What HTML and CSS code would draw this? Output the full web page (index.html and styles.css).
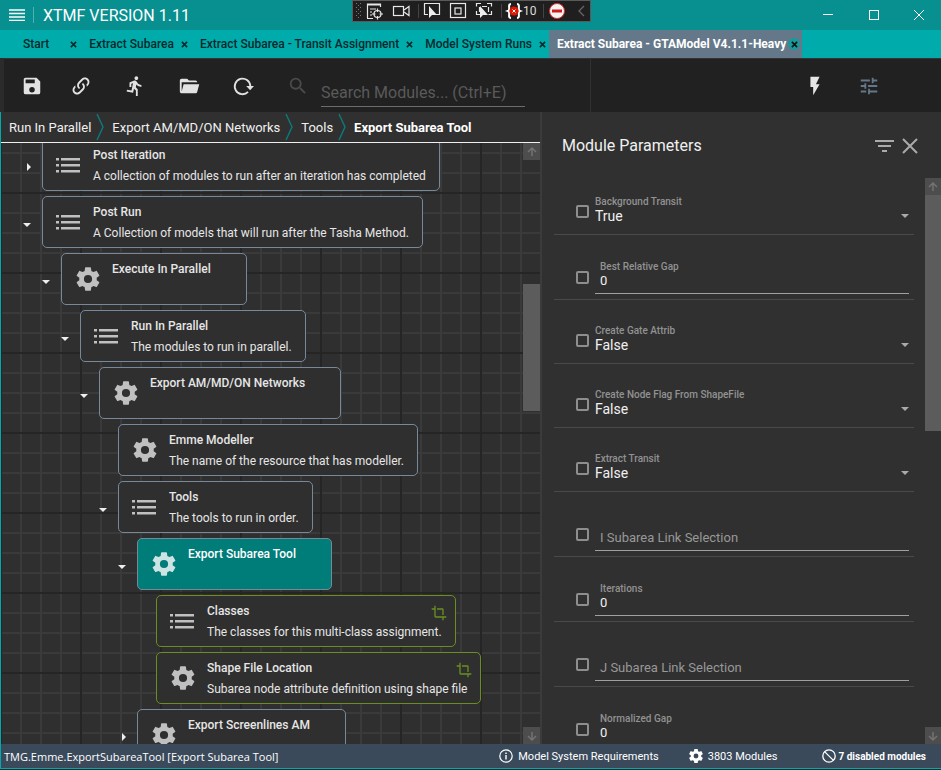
FILE: index.html
```html
<!DOCTYPE html>
<html lang="en">
<head>
<meta charset="utf-8">
<meta name="viewport" content="width=device-width, initial-scale=1">
<title>XTMF Version 1.11</title>
<link rel="stylesheet" href="styles.css">
</head>
<body>
<svg class="symbols" aria-hidden="true">
  <symbol id="cog" viewBox="0 0 24 24"><path d="M12,15.5A3.5,3.5 0 0,1 8.5,12A3.5,3.5 0 0,1 12,8.5A3.5,3.5 0 0,1 15.5,12A3.5,3.5 0 0,1 12,15.5M19.43,12.97C19.47,12.65 19.5,12.33 19.5,12C19.5,11.67 19.47,11.34 19.43,11L21.54,9.37C21.73,9.22 21.78,8.95 21.66,8.73L19.66,5.27C19.54,5.05 19.27,4.96 19.05,5.05L16.56,6.05C16.04,5.66 15.5,5.32 14.87,5.07L14.5,2.42C14.46,2.18 14.25,2 14,2H10C9.75,2 9.54,2.18 9.5,2.42L9.13,5.07C8.5,5.32 7.96,5.66 7.44,6.05L4.95,5.05C4.73,4.96 4.46,5.05 4.34,5.27L2.34,8.73C2.21,8.95 2.27,9.22 2.46,9.37L4.57,11C4.53,11.34 4.5,11.67 4.5,12C4.5,12.33 4.53,12.65 4.57,12.97L2.46,14.63C2.27,14.78 2.21,15.05 2.34,15.27L4.34,18.73C4.46,18.95 4.73,19.03 4.95,18.95L7.44,17.94C7.96,18.34 8.5,18.68 9.13,18.93L9.5,21.58C9.54,21.82 9.75,22 10,22H14C14.25,22 14.46,21.82 14.5,21.58L14.87,18.93C15.5,18.67 16.04,18.34 16.56,17.94L19.05,18.95C19.27,19.03 19.54,18.95 19.66,18.73L21.66,15.27C21.78,15.05 21.73,14.78 21.54,14.63L19.43,12.97Z"/></symbol>
  <symbol id="list" viewBox="0 0 28 28"><path d="M1 7h3v2.600H1zM6 7h19v2.600H6zM1 13h3v2.600H1zM6 13h19v2.600H6zM1 19h3v2.600H1zM6 19h19v2.600H6z"/></symbol>
  <symbol id="crop" viewBox="0 0 24 24"><path d="M7,17V1H5V5H1V7H5V17A2,2 0 0,0 7,19H17V23H19V19H23V17M17,15H19V7C19,5.89 18.1,5 17,5H9V7H17V15Z"/></symbol>
  <symbol id="open" viewBox="0 0 10 10"><path d="M1 3h8L5 7z"/></symbol>
  <symbol id="shut" viewBox="0 0 10 10"><path d="M5 0v8l4-4z"/></symbol>
  <symbol id="up" viewBox="0 0 10 10"><path d="M5 9V2M1 5l4-4 4 4" fill="none" stroke="currentColor" stroke-width="1.5"/></symbol>
  <symbol id="down" viewBox="0 0 10 10"><path d="M5 1v7M1 5l4 4 4-4" fill="none" stroke="currentColor" stroke-width="1.5"/></symbol>
  <symbol id="x" viewBox="0 0 8 8"><path d="M1 1l6 6M7 1L1 7" fill="none" stroke="currentColor" stroke-width="1.8"/></symbol>
  <symbol id="chevron" viewBox="0 0 8 28"><path d="M1 1l6 13-6 13" fill="none" stroke="currentColor" stroke-width="1.4"/></symbol>
</svg>

<div class="window">
  <header class="titlebar">
    <button class="menu" aria-label="Menu"><svg viewBox="0 0 16 12"><path d="M0 1h16M0 4.500h16M0 8h16M0 11.500h16" stroke="currentColor" stroke-width="1.4"/></svg></button>
    <h1>XTMF VERSION 1.11</h1>
    <div class="caption">
      <button aria-label="Minimize"><svg viewBox="0 0 12 12"><path d="M1 5.500h10" stroke="currentColor"/></svg></button>
      <button aria-label="Maximize"><svg viewBox="0 0 12 12"><rect x="1.500" y="1.500" width="9" height="9" fill="none" stroke="currentColor"/></svg></button>
      <button aria-label="Close"><svg viewBox="0 0 12 12"><path d="M1 1l10 10M11 1L1 11" stroke="currentColor"/></svg></button>
    </div>
    <div class="debug">
      <svg viewBox="0 0 238 20" aria-hidden="true">
        <g fill="#777"><path d="M3 2h1v1H3zM7 2h1v1H7zM5 4h1v1H5zM3 6h1v1H3zM7 6h1v1H7zM5 8h1v1H5zM3 10h1v1H3zM7 10h1v1H7zM5 12h1v1H5zM3 14h1v1H3zM7 14h1v1H7zM5 16h1v1H5z"/></g>
        <g fill="none" stroke="#e8e8e8" stroke-width="1.2">
          <path d="M14.500 17V3h13v3M14 4h14M17 8h6M17 11h2M17 14h2M14 17.500h6"/><circle cx="24.500" cy="13" r="3.500"/><path d="M24.500 7.500v3.500M24.500 15v3.500M19 13h3.500M26.500 13h3.500"/>
          <rect x="40.500" y="5.500" width="10" height="9"/><path d="M51 9l5-3.500v9L51 11"/>
          <path d="M75 13.500h-3.500v-11h15v11H83"/>
          <rect x="97.500" y="2.500" width="15" height="14"/><rect x="102" y="7" width="6" height="6"/>
          <path d="M128 2.500h-4.500v3M134 2.500h4.500v3M123.500 10v3.500h4M138.500 10v3.500h-3M129 5.500h5M126.500 6v5M135.500 6v5"/>
        </g>
        <path d="M76 5v12l3-3h5zM127 5v12l3-3h5z" fill="#eee"/>
        <path d="M65.500 3v14M148.500 3v14M190.500 3v14" stroke="#444"/>
        <path d="M158 3c-4 0 0 6-3 7 3 1-1 7 3 7M164 3c4 0 0 6 3 7-3 1 1 7-3 7" fill="none" stroke="#fff" stroke-width="2"/>
        <circle cx="161" cy="10" r="4.500" fill="#e51400"/><path d="M159.500 8.500l3 3M162.500 8.500l-3 3" stroke="#fff"/>
        <circle cx="204" cy="10" r="7.500" fill="#f4f4f4" stroke="#e03030"/><path d="M199 8.500h10v3h-10z" fill="#d51a1a"/>
        <path d="M231 5l-5 5 5 5" fill="none" stroke="#666" stroke-width="1.300"/>
      </svg>
      <span>10</span>
    </div>
  </header>

  <nav class="tabs" aria-label="Documents">
    <div class="tab first"><a href="#">Start</a><button aria-label="Close Start"><svg><use href="#x"/></svg></button></div>
    <div class="tab"><a href="#">Extract Subarea</a><button aria-label="Close tab"><svg><use href="#x"/></svg></button></div>
    <div class="tab"><a href="#">Extract Subarea - Transit Assignment</a><button aria-label="Close tab"><svg><use href="#x"/></svg></button></div>
    <div class="tab"><a href="#">Model System Runs</a><button aria-label="Close tab"><svg><use href="#x"/></svg></button></div>
    <div class="tab active"><a href="#">Extract Subarea - GTAModel V4.1.1-Heavy</a><button aria-label="Close tab"><svg><use href="#x"/></svg></button></div>
  </nav>

  <div class="toolbar">
    <div class="tools">
      <button class="save" aria-label="Save"><svg viewBox="0 0 24 24"><path d="M15,9H5V5H15M12,19A3,3 0 0,1 9,16A3,3 0 0,1 12,13A3,3 0 0,1 15,16A3,3 0 0,1 12,19M17,3H5C3.89,3 3,3.9 3,5V19A2,2 0 0,0 5,21H19A2,2 0 0,0 21,19V7L17,3Z"/></svg></button>
      <button aria-label="Link parameters"><svg viewBox="0 0 24 24"><path d="M10.59,13.41C11,13.8 11,14.44 10.59,14.83C10.2,15.22 9.56,15.22 9.17,14.83C7.22,12.88 7.22,9.71 9.17,7.76V7.76L12.71,4.22C14.66,2.27 17.83,2.27 19.78,4.22C21.73,6.17 21.73,9.34 19.78,11.29L18.29,12.78C18.3,11.96 18.17,11.14 17.89,10.36L18.36,9.88C19.54,8.71 19.54,6.81 18.36,5.64C17.19,4.46 15.29,4.46 14.12,5.64L10.59,9.17C9.41,10.34 9.41,12.24 10.59,13.41M13.41,9.17C13.8,8.78 14.44,8.78 14.83,9.17C16.78,11.12 16.78,14.29 14.83,16.24V16.24L11.29,19.78C9.34,21.73 6.17,21.73 4.22,19.78C2.27,17.83 2.27,14.66 4.22,12.71L5.71,11.22C5.7,12.04 5.83,12.86 6.11,13.65L5.64,14.12C4.46,15.29 4.46,17.19 5.64,18.36C6.81,19.54 8.71,19.54 9.88,18.36L13.41,14.83C14.59,13.66 14.59,11.76 13.41,10.59C13,10.2 13,9.56 13.41,9.17Z"/></svg></button>
      <button aria-label="Run"><svg viewBox="0 0 24 24"><path d="M13.49 5.48c1.1 0 2-.9 2-2s-.9-2-2-2-2 .9-2 2 .9 2 2 2zm-3.6 13.9l1-4.4 2.1 2v6h2v-7.5l-2.1-2 .6-3c1.3 1.5 3.3 2.5 5.5 2.5v-2c-1.9 0-3.500-1-4.300-2.400l-1-1.600c-.4-.6-1-1-1.700-1-.3 0-.5.1-.8.1l-5.200 2.200v4.700h2v-3.400l1.800-.7-1.600 8.100-4.900-1-.4 2 7 1.400z"/></svg></button>
      <button aria-label="Open folder"><svg viewBox="0 0 24 24"><path d="M19,20H4C2.89,20 2,19.1 2,18V6C2,4.89 2.89,4 4,4H10L12,6H19A2,2 0 0,1 21,8H21L4,8V18L6.14,10H23.21L20.93,18.5C20.7,19.37 19.92,20 19,20Z"/></svg></button>
      <button aria-label="Reload"><svg viewBox="0 0 24 24"><path d="M17.500 18.500A8.500 8.500 0 1 1 20 12" fill="none" stroke="currentColor" stroke-width="2"/><path d="M15.500 12H24l-4.200 4.500z"/></svg></button>
    </div>
    <label class="search">
      <svg viewBox="0 0 24 24" aria-hidden="true"><path d="M9.5,3A6.5,6.5 0 0,1 16,9.5C16,11.11 15.41,12.59 14.44,13.73L14.71,14H15.5L20.5,19L19,20.5L14,15.5V14.71L13.73,14.44C12.59,15.41 11.11,16 9.5,16A6.5,6.5 0 0,1 3,9.5A6.5,6.5 0 0,1 9.5,3M9.5,5C7,5 5,7 5,9.5C5,12 7,14 9.5,14C12,14 14,12 14,9.5C14,7 12,5 9.5,5Z"/></svg>
      <input type="text" placeholder="Search Modules... (Ctrl+E)" aria-label="Search Modules">
    </label>
    <div class="actions">
      <button aria-label="Quick parameters"><svg viewBox="0 0 24 24"><path d="M7,2V13H10V22L17,10H13L17,2H7Z"/></svg></button>
      <button class="tune" aria-label="Module parameters"><svg viewBox="0 0 24 24"><path d="M3,17V19H9V17H3M3,5V7H13V5H3M13,21V19H21V17H13V15H11V21H13M7,9V11H3V13H7V15H9V9H7M21,13V11H11V13H21M15,9H17V7H21V5H17V3H15V9Z"/></svg></button>
    </div>
  </div>

  <div class="content">
    <main class="system">
      <nav class="crumbs" aria-label="Breadcrumb">
        <a href="#">Run In Parallel</a><svg><use href="#chevron"/></svg>
        <a href="#">Export AM/MD/ON Networks</a><svg><use href="#chevron"/></svg>
        <a href="#">Tools</a><svg><use href="#chevron"/></svg>
        <a href="#" class="current">Export Subarea Tool</a>
      </nav>
      <div class="canvas">
        <ul class="tree">
          <li>
            <div class="row"><button class="toggle" aria-label="Expand"><svg><use href="#shut"/></svg></button>
              <div class="node"><svg class="icon"><use href="#list"/></svg><div><h2>Post Iteration</h2><p>A collection of modules to run after an iteration has completed</p></div></div></div>
          </li>
          <li>
            <div class="row"><button class="toggle" aria-label="Collapse"><svg><use href="#open"/></svg></button>
              <div class="node"><svg class="icon"><use href="#list"/></svg><div><h2>Post Run</h2><p>A Collection of models that will run after the Tasha Method.</p></div></div></div>
            <ul>
              <li>
                <div class="row"><button class="toggle" aria-label="Collapse"><svg><use href="#open"/></svg></button>
                  <div class="node"><svg class="icon"><use href="#cog"/></svg><div><h2>Execute In Parallel</h2></div></div></div>
                <ul>
                  <li>
                    <div class="row"><button class="toggle" aria-label="Collapse"><svg><use href="#open"/></svg></button>
                      <div class="node"><svg class="icon"><use href="#list"/></svg><div><h2>Run In Parallel</h2><p>The modules to run in parallel.</p></div></div></div>
                    <ul>
                      <li>
                        <div class="row"><button class="toggle" aria-label="Collapse"><svg><use href="#open"/></svg></button>
                          <div class="node"><svg class="icon"><use href="#cog"/></svg><div><h2>Export AM/MD/ON Networks</h2></div></div></div>
                        <ul>
                          <li>
                            <div class="row leaf">
                              <div class="node"><svg class="icon"><use href="#cog"/></svg><div><h2>Emme Modeller</h2><p>The name of the resource that has modeller.</p></div></div></div>
                          </li>
                          <li>
                            <div class="row"><button class="toggle" aria-label="Collapse"><svg><use href="#open"/></svg></button>
                              <div class="node"><svg class="icon"><use href="#list"/></svg><div><h2>Tools</h2><p>The tools to run in order.</p></div></div></div>
                            <ul>
                              <li>
                                <div class="row"><button class="toggle" aria-label="Collapse"><svg><use href="#open"/></svg></button>
                                  <div class="node selected"><svg class="icon"><use href="#cog"/></svg><div><h2>Export Subarea Tool</h2></div></div></div>
                                <ul>
                                  <li>
                                    <div class="row leaf">
                                      <div class="node meta"><svg class="icon"><use href="#list"/></svg><div><h2>Classes</h2><p>The classes for this multi-class assignment.</p></div><svg class="badge"><use href="#crop"/></svg></div></div>
                                  </li>
                                  <li>
                                    <div class="row leaf">
                                      <div class="node meta"><svg class="icon"><use href="#cog"/></svg><div><h2>Shape File Location</h2><p>Subarea node attribute definition using shape file</p></div><svg class="badge"><use href="#crop"/></svg></div></div>
                                  </li>
                                </ul>
                              </li>
                              <li>
                                <div class="row"><button class="toggle" aria-label="Expand"><svg><use href="#shut"/></svg></button>
                                  <div class="node"><svg class="icon"><use href="#cog"/></svg><div><h2>Export Screenlines AM</h2></div></div></div>
                              </li>
                            </ul>
                          </li>
                        </ul>
                      </li>
                    </ul>
                  </li>
                </ul>
              </li>
            </ul>
          </li>
        </ul>
        <div class="scrollbar tree-scroll" aria-hidden="true"><span class="arrow"><svg><use href="#up"/></svg></span><span class="before"></span><span class="thumb"></span><span class="after"></span><span class="arrow"><svg><use href="#down"/></svg></span></div>
      </div>
    </main>

    <aside class="params">
      <header>
        <h2>Module Parameters</h2>
        <button aria-label="Filter"><svg viewBox="0 0 20 14"><path d="M0 1h19v2H0zM3 6h13v2H3zM7 11h5v2H7z"/></svg></button>
        <button aria-label="Close"><svg viewBox="0 0 16 16"><path d="M1 1l14 14M15 1L1 15" stroke="currentColor" stroke-width="2"/></svg></button>
      </header>
      <div class="body">
        <div class="list">
          <div class="param combo"><input type="checkbox" aria-label="Quick: Background Transit"><div class="field"><label for="p1">Background Transit</label><select id="p1"><option>True</option><option>False</option></select></div><svg class="drop"><use href="#open"/></svg></div>
          <div class="param"><input type="checkbox" aria-label="Quick: Best Relative Gap"><div class="field"><label for="p2">Best Relative Gap</label><input type="text" id="p2" value="0"></div></div>
          <div class="param combo"><input type="checkbox" aria-label="Quick: Create Gate Attrib"><div class="field"><label for="p3">Create Gate Attrib</label><select id="p3"><option>False</option><option>True</option></select></div><svg class="drop"><use href="#open"/></svg></div>
          <div class="param combo"><input type="checkbox" aria-label="Quick: Create Node Flag From ShapeFile"><div class="field"><label for="p4">Create Node Flag From ShapeFile</label><select id="p4"><option>False</option><option>True</option></select></div><svg class="drop"><use href="#open"/></svg></div>
          <div class="param combo"><input type="checkbox" aria-label="Quick: Extract Transit"><div class="field"><label for="p5">Extract Transit</label><select id="p5"><option>False</option><option>True</option></select></div><svg class="drop"><use href="#open"/></svg></div>
          <div class="param"><input type="checkbox" aria-label="Quick: I Subarea Link Selection"><div class="field"><input type="text" placeholder="I Subarea Link Selection" aria-label="I Subarea Link Selection"></div></div>
          <div class="param"><input type="checkbox" aria-label="Quick: Iterations"><div class="field"><label for="p7">Iterations</label><input type="text" id="p7" value="0"></div></div>
          <div class="param"><input type="checkbox" aria-label="Quick: J Subarea Link Selection"><div class="field"><input type="text" placeholder="J Subarea Link Selection" aria-label="J Subarea Link Selection"></div></div>
          <div class="param"><input type="checkbox" aria-label="Quick: Normalized Gap"><div class="field"><label for="p9">Normalized Gap</label><input type="text" id="p9" value="0"></div></div>
        </div>
        <div class="scrollbar param-scroll" aria-hidden="true"><span class="arrow"><svg><use href="#up"/></svg></span><span class="thumb"></span><span class="after"></span><span class="arrow"><svg><use href="#down"/></svg></span></div>
      </div>
    </aside>
  </div>

  <footer class="status">
    <span class="path">TMG.Emme.ExportSubareaTool [Export Subarea Tool]</span>
    <span class="item"><svg viewBox="0 0 14 14"><circle cx="7" cy="7" r="6.200" fill="none" stroke="currentColor" stroke-width="1.200"/><path d="M6.300 6h1.400v4.500H6.300zM6.300 3.500h1.400v1.400H6.300z"/></svg>Model System Requirements</span>
    <span class="item"><svg viewBox="2 2 20 20"><use href="#cog" width="24" height="24"/></svg>3803 Modules</span>
    <span class="item disabled"><svg viewBox="0 0 14 14"><g fill="none" stroke="currentColor" stroke-width="1.300"><circle cx="7" cy="7" r="6.200"/><path d="M2.600 2.600l8.800 8.800"/></g></svg>7 disabled modules</span>
  </footer>
</div>
</body>
</html>
```
FILE: styles.css
```css
* { box-sizing: border-box; }

body {
  margin: 0;
  background: #2b2b2b;
  color: #e6e6e6;
  font-family: Roboto, "Liberation Sans", sans-serif;
  font-size: 13px;
}

h1, h2, p, ul { margin: 0; padding: 0; }
ul { list-style: none; }
a { color: inherit; text-decoration: none; }
svg { display: block; fill: currentColor; flex: none; }
.symbols { position: absolute; width: 0; height: 0; }

button {
  display: flex;
  align-items: center;
  justify-content: center;
  padding: 0;
  border: 0;
  background: none;
  color: inherit;
}

input, select {
  font: inherit;
  color: inherit;
  background: none;
  border: 0;
  border-radius: 0;
  padding: 0;
  margin: 0;
  outline: 0;
  min-width: 0;
}

.window {
  display: flex;
  flex-direction: column;
  height: 100vh;
  padding-bottom: 1px;
  overflow: hidden;
}

/* Title bar */
.titlebar {
  position: relative;
  display: flex;
  align-items: center;
  flex: none;
  height: 30px;
  background: #088f8f;
  color: #fff;
}
.menu { width: 34px; height: 16px; border-right: 1px solid #4fb0b0; }
.menu svg { width: 16px; height: 12px; }
.titlebar h1 { margin-left: 9px; font-size: 16px; font-weight: 400; }
.caption { display: flex; margin-left: auto; }
.caption button { width: 46px; height: 30px; }
.caption button:last-child { width: 44px; }
.caption svg { width: 12px; height: 12px; }

.debug {
  position: absolute;
  top: 0;
  left: 352px;
  width: 239px;
  height: 22px;
  background: #1f1f1f;
  border: 1px solid #5a5a5a;
}
.debug svg { width: 238px; height: 20px; }
.debug span {
  position: absolute;
  top: 3px;
  left: 170px;
  font-size: 12px;
  line-height: 14px;
  color: #ddd;
}

/* Document tabs */
.tabs {
  display: flex;
  flex: none;
  height: 28px;
  background: #00abab;
  color: #06292c;
  font-size: 12px;
  font-weight: 500;
}
.tab { display: flex; align-items: center; gap: 4px; padding: 0 1px 0 9px; white-space: nowrap; }
.tab button { width: 12px; height: 12px; border-radius: 6px; }
.tab svg { width: 7px; height: 7px; }
.tab.first { padding-left: 23px; }
.tab.first button { margin-left: 14px; }
.tab.active { gap: 2px; padding: 0 2px 0 8px; background: #64788a; color: #fff; font-weight: 700; }
.tab.active button { background: #169a9a; color: #111; }

/* Toolbar */
.toolbar {
  display: flex;
  align-items: center;
  flex: none;
  height: 54px;
  margin-left: 4px;
  border-top: 1px solid #333;
  background: #212121;
}
.toolbar button { width: 54px; height: 40px; }
.toolbar .save { width: 45px; }
.toolbar svg { width: 22px; height: 22px; }
.tools { display: flex; padding-left: 5px; color: #e2e2e2; }
.search {
  display: flex;
  align-items: center;
  align-self: stretch;
  gap: 12px;
  width: 321px;
  padding-left: 17px;
  border-right: 1px solid #303030;
  color: #4a4a4a;
}
.search input {
  width: 204px;
  height: 28px;
  margin-top: 14px;
  border-bottom: 1px solid #6c6c6c;
  font-size: 16px;
}
.search input::placeholder { color: #5a5a5a; opacity: 1; }
.actions { display: flex; margin-left: auto; padding-right: 45px; color: #e6e6e6; }
.actions .tune { color: #64788a; }

/* Main split */
.content { display: flex; flex: 1; min-height: 0; border-left: 1px solid #00abab; }
.system { display: flex; flex-direction: column; flex: 3; min-width: 0; background: #303030; }
.params { display: flex; flex-direction: column; flex: none; width: 401px; border-left: 2px solid #3b3b3b; background: #303030; }

.crumbs {
  display: flex;
  align-items: center;
  flex: none;
  height: 31px;
  padding-left: 8px;
  border-bottom: 1px solid #f0f0f0;
  color: #f0f0f0;
  white-space: nowrap;
}
.crumbs svg { width: 8px; height: 28px; margin: 0 8px 0 5px; color: #0b7c7c; }
.crumbs .current { font-weight: 700; color: #fff; }

/* Module tree over a ruled canvas */
.canvas {
  display: flex;
  flex: 1;
  min-height: 0;
  overflow: hidden;
  background-color: #2f2f2f;
  background-image:
    linear-gradient(#252525 2px, transparent 2px),
    linear-gradient(90deg, #252525 2px, transparent 2px),
    linear-gradient(#3a3a3a 2px, transparent 2px),
    linear-gradient(90deg, #3a3a3a 2px, transparent 2px);
  background-size: 80px 80px, 80px 80px, 20px 20px, 20px 20px;
  background-position: 79px 49px, 79px 49px, 19px 9px, 19px 9px;
}
.tree { flex: 1; min-width: 0; margin-top: -4px; padding-left: 11px; }
.tree ul { padding-left: 19px; }
.row { display: flex; align-items: center; margin-bottom: 5px; }
.row.leaf { padding-left: 30px; }
.toggle { width: 30px; height: 52px; color: #eee; }
.toggle svg { width: 10px; height: 10px; margin-top: 6px; }
.node {
  position: relative;
  display: flex;
  gap: 10px;
  height: 52px;
  padding: 0 11px 0 12px;
  border: 1px solid #778899;
  border-radius: 5px;
  background: #2f2f2f;
  white-space: nowrap;
}
.icon { width: 28px; height: 28px; margin-top: 11px; color: #c0c0c0; }
.node h2 { padding: 7px 24px 0 0; font-size: 12px; line-height: 16px; font-weight: 500; }
.node p { margin-top: 5px; padding-right: 2px; font-size: 12px; line-height: 16px; }
.node.selected { background: #007c79; color: #fff; }
.selected .icon { color: #cce4e4; }
.node.meta { border-color: #6b8e23; }
.badge { position: absolute; top: 9px; right: 8px; width: 16px; height: 16px; color: #6b8e23; }

.scrollbar { display: flex; flex-direction: column; flex: none; width: 17px; }
.arrow { display: flex; align-items: center; justify-content: center; height: 17px; background: #4d4d4d; color: #737373; }
.arrow svg { width: 10px; height: 10px; }
.thumb { background: #5c5c5c; }
.tree-scroll .before { flex: 124; }
.tree-scroll .thumb { flex: 127; }
.tree-scroll .after { flex: 316; }
.param-scroll { width: 16px; margin-top: 7px; }
.param-scroll .thumb { flex: 236; }
.param-scroll .after { flex: 296; }

/* Parameters */
.params header { display: flex; align-items: center; flex: none; height: 59px; padding: 8px 23px 0 20px; color: #aaa; }
.params h2 { margin-right: auto; font-size: 16px; font-weight: 400; color: #f0f0f0; }
.params header button { margin-left: 7px; }
.params header button:nth-of-type(1) svg { width: 20px; height: 14px; }
.params header button:nth-of-type(2) svg { width: 16px; height: 16px; }
.body { display: flex; flex: 1; min-height: 0; overflow: hidden; }
.list { flex: 1; min-width: 0; padding: 0 11px 0 12px; }
.param { display: flex; align-items: flex-end; height: 65px; padding: 0 5px 5px 22px; border-bottom: 1px solid #494949; }
.param.combo { height: 64px; padding: 0 4px 9px 22px; }
.param input[type="checkbox"] {
  appearance: none;
  flex: none;
  width: 13px;
  height: 13px;
  margin: 0 6px 10px 0;
  border: 2px solid #8e8e8e;
  border-radius: 2px;
}
.param.combo input[type="checkbox"] { margin-bottom: 7px; }
.field { display: flex; flex-direction: column; flex: 1; min-width: 0; }
.field label { font-size: 10px; line-height: 10px; font-weight: 500; color: #929292; }
.field input { height: 22px; padding: 0 0 4px 5px; border-bottom: 1px solid #a0a0a0; color: #f0f0f0; }
.field input::placeholder { color: #989898; opacity: 1; }
.param:not(.combo) label { padding-left: 5px; }
.field select { appearance: none; height: 18px; font-size: 14px; color: #f0f0f0; }
.drop { width: 10px; height: 10px; margin-bottom: 4px; color: #aaa; }

/* Status bar */
.status {
  display: flex;
  align-items: center;
  flex: none;
  height: 25px;
  padding: 0 15px 0 3px;
  border-left: 1px solid #00abab;
  border-bottom: 1px solid #00abab;
  background: #3a4a5a;
  color: #fff;
  font-size: 11px;
  white-space: nowrap;
}
.path { margin-right: auto; font-family: "Open Sans", "Noto Sans", sans-serif; }
.item { display: flex; align-items: center; gap: 5px; margin-left: 30px; }
.item svg { width: 14px; height: 14px; }
.item.disabled { margin-left: 44px; gap: 3px; font-size: 10px; font-weight: 700; }
```
